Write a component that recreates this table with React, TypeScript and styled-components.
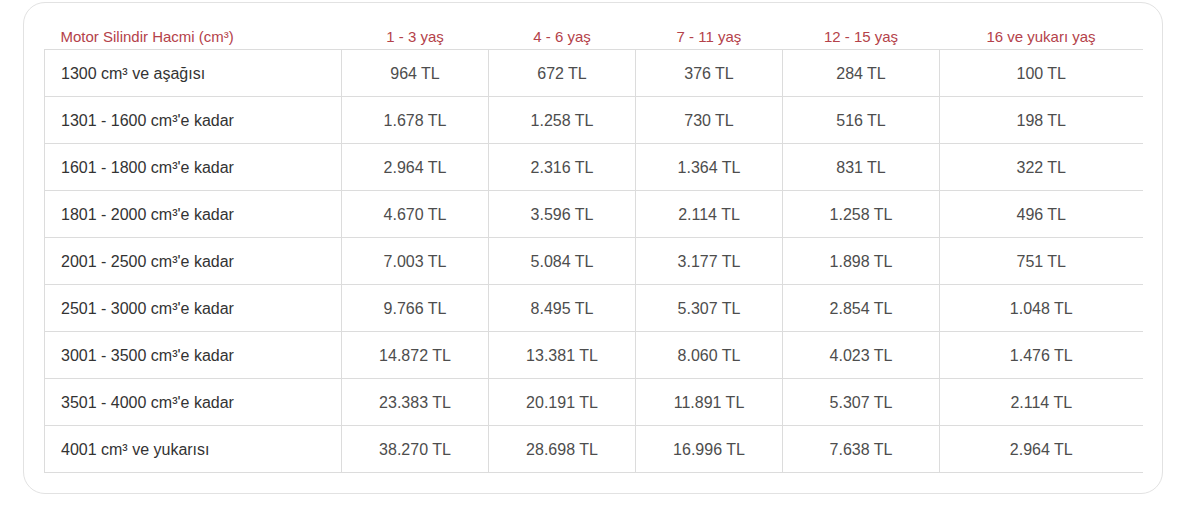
import React from "react";
import styled, { createGlobalStyle } from "styled-components";

const Global = createGlobalStyle`
  html, body { margin: 0; padding: 0; background: #ffffff; }
  body { font-family: "Liberation Sans", Arial, Helvetica, sans-serif; }
`;

const Card = styled.div`
  box-sizing: border-box;
  margin: 2px 0 0 23px;
  width: 1140px;
  height: 492px;
  border: 1px solid #e2e2e2;
  border-radius: 22px;
  padding: 22px 20px 0 20px;
`;

const Table = styled.table`
  border-collapse: collapse;
  table-layout: fixed;
  width: 1098px;
`;

const Col = styled.col<{ $w: number }>`
  width: ${(p) => p.$w}px;
`;

const HeadCell = styled.th<{ $left?: boolean }>`
  box-sizing: border-box;
  height: 24px;
  padding: 0 0 1px ${(p) => (p.$left ? "16px" : "0")};
  text-align: ${(p) => (p.$left ? "left" : "center")};
  font-weight: 400;
  font-size: 15px;
  color: #b4424a;
  border-bottom: 1px solid #dcdcdc;
  vertical-align: middle;
  white-space: nowrap;
`;

const Cell = styled.td<{ $left?: boolean; $last?: boolean }>`
  box-sizing: border-box;
  height: 47px;
  padding: 2px 0 0 ${(p) => (p.$left ? "16px" : "0")};
  text-align: ${(p) => (p.$left ? "left" : "center")};
  font-size: 16px;
  color: ${(p) => (p.$left ? "#333" : "#4d4d4d")};
  border-bottom: 1px solid #dcdcdc;
  border-left: ${(p) => (p.$left ? "1px solid #dcdcdc" : "none")};
  border-right: ${(p) => (p.$last ? "none" : "1px solid #dcdcdc")};
  vertical-align: middle;
  white-space: nowrap;
`;

const headers = [
  "Motor Silindir Hacmi (cm³)",
  "1 - 3 yaş",
  "4 - 6 yaş",
  "7 - 11 yaş",
  "12 - 15 yaş",
  "16 ve yukarı yaş",
];
const widths = [297, 147, 147, 147, 157, 203];

const rows: string[][] = [
  ["1300 cm³ ve aşağısı", "964 TL", "672 TL", "376 TL", "284 TL", "100 TL"],
  ["1301 - 1600 cm³'e kadar", "1.678 TL", "1.258 TL", "730 TL", "516 TL", "198 TL"],
  ["1601 - 1800 cm³'e kadar", "2.964 TL", "2.316 TL", "1.364 TL", "831 TL", "322 TL"],
  ["1801 - 2000 cm³'e kadar", "4.670 TL", "3.596 TL", "2.114 TL", "1.258 TL", "496 TL"],
  ["2001 - 2500 cm³'e kadar", "7.003 TL", "5.084 TL", "3.177 TL", "1.898 TL", "751 TL"],
  ["2501 - 3000 cm³'e kadar", "9.766 TL", "8.495 TL", "5.307 TL", "2.854 TL", "1.048 TL"],
  ["3001 - 3500 cm³'e kadar", "14.872 TL", "13.381 TL", "8.060 TL", "4.023 TL", "1.476 TL"],
  ["3501 - 4000 cm³'e kadar", "23.383 TL", "20.191 TL", "11.891 TL", "5.307 TL", "2.114 TL"],
  ["4001 cm³ ve yukarısı", "38.270 TL", "28.698 TL", "16.996 TL", "7.638 TL", "2.964 TL"],
];

export default function App() {
  return (
    <>
      <Global />
      <Card>
        <Table>
          <colgroup>
            {widths.map((w, i) => (
              <Col key={i} $w={w} />
            ))}
          </colgroup>
          <thead>
            <tr>
              {headers.map((h, i) => (
                <HeadCell key={h} $left={i === 0}>
                  {h}
                </HeadCell>
              ))}
            </tr>
          </thead>
          <tbody>
            {rows.map((r) => (
              <tr key={r[0]}>
                {r.map((c, i) => (
                  <Cell key={i} $left={i === 0} $last={i === r.length - 1}>
                    {c}
                  </Cell>
                ))}
              </tr>
            ))}
          </tbody>
        </Table>
      </Card>
    </>
  );
}
